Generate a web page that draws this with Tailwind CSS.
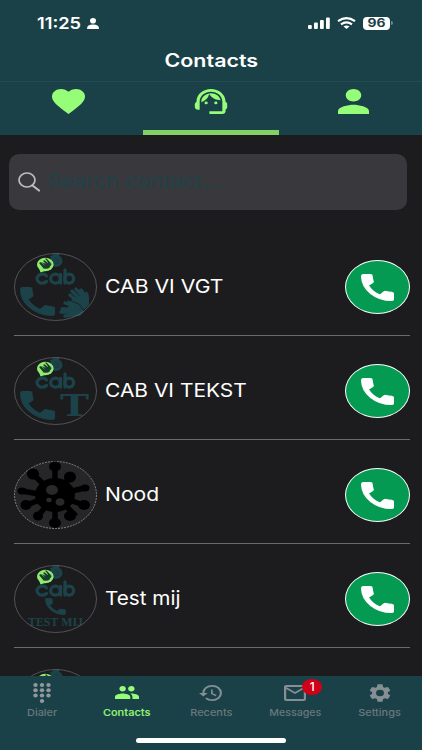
<!DOCTYPE html>
<html lang="en">
<head>
<meta charset="utf-8">
<title>Contacts</title>
<script src="https://cdn.jsdelivr.net/npm/@tailwindcss/browser@4"></script>
</head>
<body class="w-[422px] h-[750px] overflow-hidden bg-[#1c1c1e] font-[Inter,sans-serif] text-white">
<svg class="hidden">
  <symbol id="phone" viewBox="3 3 18 18" preserveAspectRatio="none"><path stroke="currentColor" stroke-width=".7" stroke-linejoin="round" d="M7 10.600c1.300 2.700 3.700 5.100 6.400 6.400l2.100-2.100c.27-.27.67-.36 1.020-.24 1.120.37 2.330.57 3.150.57.55 0 1 .45 1 1V19.650c0 .55-.45 1-1 1C10.700 20.650 3.350 13.300 3.350 4.350c0-.55.45-1 1-1h3.700c.55 0 1 .45 1 1 0 1.150.2 2.250.55 3.370.11.35.03.74-.25 1.020z"/></symbol>
  <symbol id="person" viewBox="4 4 16 16" preserveAspectRatio="none"><path d="M12 12c2.210 0 4-1.790 4-4s-1.790-4-4-4-4 1.790-4 4 1.790 4 4 4zm0 2c-2.670 0-8 1.340-8 4v2h16v-2c0-2.660-5.330-4-8-4z"/></symbol>
  <symbol id="cab" viewBox="0 0 83 68">
    <ellipse cx="42" cy="8" rx="6.500" ry="6" fill="#1b4349"/><path d="M35 4l6-3.500h5L44 4z" fill="#1b4349"/><path d="M41 5.500h4M41 8h5M41 10.500h4" stroke="#1d3439" stroke-width=".8"/>
    <ellipse cx="31.300" cy="11.500" rx="8.300" ry="6.800" fill="#8dec6e"/><path d="M25 15l1.500 4.500 6-2z" fill="#8dec6e"/>
    <path d="M25 10l3 3q3 4 7 2l2-4-4-4 1 3-4-3 2 4-4-2 3 4-4-4z" fill="#1c3a2c"/>
    <path d="M27 11l3 4 5-1 2-3M30 8l4 4M32 6l4 4" stroke="#1c3a2c" stroke-width="1.300" stroke-linecap="round" fill="none"/>
    <g transform="translate(0 1)" fill="none" stroke="#1b4349" stroke-width="3.300" stroke-linecap="round"><path d="M32.500 21.800a5.300 4.600 0 1 0 0 5.600"/><ellipse cx="41.500" cy="24.600" rx="4.900" ry="4.500"/><path d="M46.500 20.500v8.500M51 16v13"/><ellipse cx="55.200" cy="24.600" rx="4.400" ry="4.500"/></g>
  </symbol>
</svg>
<div class="relative flex h-full flex-col">
  <header class="h-[135px] shrink-0 bg-[#1b4148]">
    <div class="flex h-[46px] items-start pt-[15px]">
      <div class="ml-[37px] w-[50px] text-[16px] leading-4 font-semibold"><span class="inline-block origin-left scale-x-[1.140]">11:25</span></div>
      <svg class="mt-[3px] h-[11px] w-3" viewBox="0 0 12 11" fill="#fff"><ellipse cx="6" cy="2.800" rx="3" ry="2.800"/><path d="M0 10.500Q0 6.500 6 6.500t6 4Q12 11 11 11H1Q0 11 0 10.500"/></svg>
      <svg class="mt-[2px] ml-[209px] h-3 w-[22px]" viewBox="0 0 22 12" fill="#fff"><rect y="8" width="3.800" height="4" rx="1"/><rect x="6" y="5.500" width="3.800" height="6.500" rx="1"/><rect x="12" y="3" width="3.800" height="9" rx="1"/><rect x="18" y=".5" width="3.800" height="11.500" rx="1"/></svg>
      <svg class="mt-[2px] ml-[7px] h-3 w-[19px]" viewBox="0 0 19 12" fill="none" stroke="#fff" stroke-width="2.200"><path d="M1 4.200q8.500-6 17 0M4 7.300q5.500-4 11 0"/><path d="M9.500 12L6.500 9.500q3-2 6 0z" fill="#fff" stroke="none"/></svg>
      <div class="mt-[2px] ml-[7px] flex h-[13px] w-[27px] items-center justify-center rounded-[4px] bg-white text-[11.500px] font-bold text-[#1b4148]"><span class="inline-block scale-x-[1.200]">96</span></div>
      <i class="mt-[6px] ml-px h-1 w-[2px] rounded-r bg-[#71898e]"></i>
    </div>
    <div class="flex h-[35px] justify-center pt-[5px] text-[18px] leading-5 font-semibold"><span class="inline-block scale-x-[1.190]">Contacts</span></div>
    <div class="grid h-[54px] grid-cols-[143px_136px_143px] border-t border-[#254b52] text-[#96fd79]">
      <div class="pl-[52px] pt-[7px]"><svg class="h-[25px] w-[33px]" viewBox="2 3 20 18.350" preserveAspectRatio="none" fill="currentColor"><path d="m12 21.350-1.450-1.320C5.400 15.360 2 12.280 2 8.500 2 5.420 4.420 3 7.500 3c1.740 0 3.410.81 4.500 2.090C13.090 3.810 14.760 3 16.500 3 19.580 3 22 5.420 22 8.500c0 3.780-3.400 6.860-8.550 11.540z"/></svg></div>
      <div class="flex border-b-[5px] border-[#82d167] pt-[7px] pl-[51px]"><svg class="h-[25px] w-[34px]" viewBox="1.500 3 21 18" preserveAspectRatio="none" fill="currentColor"><path d="M21 12.220C21 6.730 16.740 3 12 3c-4.690 0-9 3.650-9 9.280-.6.340-1 .98-1 1.720v2c0 1.100.9 2 2 2h1v-6.100c0-3.870 3.130-7 7-7s7 3.130 7 7V19h-8v2h8c1.100 0 2-.9 2-2v-1.220c.59-.31 1-.92 1-1.640v-2.300c0-.7-.41-1.310-1-1.620z"/><circle cx="9" cy="13" r="1"/><circle cx="15" cy="13" r="1"/><path d="M18 11.030A6.040 6.040 0 0 0 12.050 6c-3.030 0-6.290 2.510-6.030 6.450a8.075 8.075 0 0 0 4.860-5.890c1.310 2.630 4 4.440 7.120 4.470z"/></svg></div>
      <div class="pl-[59px] pt-[7px]"><svg class="h-[25px] w-[31px]" fill="currentColor"><use href="#person"/></svg></div>
    </div>
  </header>
  <main class="flex h-[541px] shrink-0 flex-col overflow-hidden">
    <div class="mt-[18.500px] ml-[9px] flex h-[56px] w-[398px] shrink-0 items-center rounded-[10px] bg-[#39393d] pl-[9px] text-[19px] text-[#1e4249]">
      <svg class="mr-[7px] h-[20px] w-[22px]" viewBox="0 0 22 20" fill="none" stroke="#bcbcc1" stroke-width="1.700"><ellipse cx="9" cy="8" rx="8" ry="7"/><path d="M14.500 13.500l6.500 5" stroke-width="2.200" stroke-linecap="round"/></svg><span class="mt-px inline-block origin-left scale-x-[1.140]">Search contact...</span>
    </div>
    <div class="mt-[22px] ml-[14px] w-[396px]">
      <div class="flex h-[104px] items-center border-b border-[#6a6a6d] pt-[8px]">
        <svg class="h-[68px] w-[83px]" viewBox="0 0 83 68"><use href="#cab"/><svg x="6" y="34" width="35" height="29" fill="#1b4349" color="#1b4349"><use href="#phone"/></svg>
          <g fill="none" stroke="#1b4349" stroke-linecap="round" stroke-width="3.400"><path d="M66 46l-8-8M69 44l-7-8M72 43l-5-6M64 49l-8-7"/><path d="M60 53l-9-3M60 56H48M60 59H47M60 62l-9 1"/></g><path d="M63 43l8-1 1-4q3 2 3 7v7L66 60 56 48zM54 51l-1-4 12 5 5 7-4 4H55z" fill="#1b4349"/><path d="M55 47l10 4 5 7" fill="none" stroke="#1c1c1e" stroke-width=".8"/>
          <ellipse cx="41.500" cy="34" rx="41" ry="33.500" fill="none" stroke="#77777b" stroke-width=".6"/></svg>
        <div class="mt-px ml-[8px] flex-1 text-[19px]"><span class="inline-block origin-left scale-x-[1.115]">CAB VI VGT</span></div>
        <div class="flex h-[54px] w-[65px] items-center justify-center rounded-[50%] border border-white bg-[#049a52]"><svg class="h-[27px] w-[33px]" fill="#fff"><use href="#phone"/></svg></div>
      </div>
      <div class="flex h-[104px] items-center border-b border-[#6a6a6d] pt-[8px]">
        <svg class="h-[68px] w-[83px]" viewBox="0 0 83 68"><use href="#cab"/><svg x="6" y="34" width="35" height="29" fill="#1b4349" color="#1b4349"><use href="#phone"/></svg><text x="46" y="59" font-family="DejaVu Serif,serif" font-weight="bold" font-size="30" textLength="29" lengthAdjust="spacingAndGlyphs" fill="#1b4349">T</text><ellipse cx="41.500" cy="34" rx="41" ry="33.500" fill="none" stroke="#77777b" stroke-width=".6"/></svg>
        <div class="mt-px ml-[8px] flex-1 text-[19px]"><span class="inline-block origin-left scale-x-[1.102]">CAB VI TEKST</span></div>
        <div class="flex h-[54px] w-[65px] items-center justify-center rounded-[50%] border border-white bg-[#049a52]"><svg class="h-[27px] w-[33px]" fill="#fff"><use href="#phone"/></svg></div>
      </div>
      <div class="flex h-[104px] items-center border-b border-[#6a6a6d] pt-[8px]">
        <svg class="h-[68px] w-[83px]" viewBox="0 0 83 68"><ellipse cx="41.500" cy="34" rx="41" ry="33.500" fill="#262628" stroke="#aaa" stroke-width=".7" stroke-dasharray="2 1"/>
          <ellipse cx="41" cy="34" rx="20" ry="17"/><g stroke="#000" stroke-width="5.500" fill="none"><path d="M41 6v56M20 14l42 41M56 16L24 55M8 30l28 5 35-8M12 44l28-10 30 10"/></g>
          <g><ellipse cx="41" cy="5.500" rx="6" ry="5"/><ellipse cx="19" cy="13" rx="6" ry="5.500"/><ellipse cx="56" cy="16" rx="6" ry="5.500"/><ellipse cx="8" cy="30" rx="4.500" ry="3.500"/><ellipse cx="71" cy="27" rx="4.500" ry="3.500"/><ellipse cx="12" cy="44" rx="5.500" ry="5"/><ellipse cx="70" cy="44" rx="6" ry="5"/><ellipse cx="24" cy="55" rx="5" ry="4.500"/><ellipse cx="56" cy="55" rx="6" ry="5"/><ellipse cx="41" cy="62" rx="6" ry="5"/></g>
          <g fill="#29292b"><ellipse cx="38" cy="29" rx="6" ry="5"/><ellipse cx="35" cy="39" rx="2.700" ry="2.300"/><ellipse cx="46" cy="41" rx="4.500" ry="3.800"/></g></svg>
        <div class="mt-px ml-[8px] flex-1 text-[19px]"><span class="inline-block origin-left scale-x-[1.110]">Nood</span></div>
        <div class="flex h-[54px] w-[65px] items-center justify-center rounded-[50%] border border-white bg-[#049a52]"><svg class="h-[27px] w-[33px]" fill="#fff"><use href="#phone"/></svg></div>
      </div>
      <div class="flex h-[104px] items-center border-b border-[#6a6a6d] pt-[8px]">
        <svg class="h-[68px] w-[83px]" viewBox="0 0 83 68"><use href="#cab"/><svg x="31" y="33" width="21" height="17" fill="#1b4349" color="#1b4349"><use href="#phone"/></svg><text x="14" y="61" font-family="Liberation Serif,serif" font-weight="bold" font-size="12" textLength="55" lengthAdjust="spacingAndGlyphs" fill="#1b4349">TEST MIJ</text><ellipse cx="41.500" cy="34" rx="41" ry="33.500" fill="none" stroke="#77777b" stroke-width=".6"/></svg>
        <div class="mt-px ml-[8px] flex-1 text-[19px]"><span class="inline-block origin-left scale-x-[1.090]">Test mij</span></div>
        <div class="flex h-[54px] w-[65px] items-center justify-center rounded-[50%] border border-white bg-[#049a52]"><svg class="h-[27px] w-[33px]" fill="#fff"><use href="#phone"/></svg></div>
      </div>
      <div class="pt-[21px]"><svg class="h-[68px] w-[83px]" viewBox="0 0 83 68"><use href="#cab"/><ellipse cx="41.500" cy="34" rx="41" ry="33.500" fill="none" stroke="#77777b" stroke-width=".6"/></svg></div>
    </div>
  </main>
  <nav class="h-[74px] shrink-0 bg-[#1b4148]">
    <div class="grid h-[62px] grid-cols-5 text-center text-[9.500px] leading-3 font-medium text-[#69787c]">
      <div class="flex flex-col items-center pt-[6px]"><svg class="h-[21px] w-[18px]" viewBox="0 0 18 21" fill="#92989c"><ellipse cx="2.500" cy="3" rx="2.200" ry="2"/><ellipse cx="9" cy="3" rx="2.200" ry="2"/><ellipse cx="15.500" cy="3" rx="2.200" ry="2"/><ellipse cx="2.500" cy="8.300" rx="2.200" ry="2"/><ellipse cx="9" cy="8.300" rx="2.200" ry="2"/><ellipse cx="15.500" cy="8.300" rx="2.200" ry="2"/><ellipse cx="2.500" cy="13.600" rx="2.200" ry="2"/><ellipse cx="9" cy="13.600" rx="2.200" ry="2"/><ellipse cx="15.500" cy="13.600" rx="2.200" ry="2"/><ellipse cx="9" cy="19" rx="2.200" ry="2"/></svg><span class="mt-[4px] inline-block scale-x-[1.150]">Dialer</span></div>
      <div class="flex flex-col items-center pt-[10px] font-semibold text-[#8eee75]"><svg class="h-[13px] w-[24px]" viewBox="1 5 22 14" preserveAspectRatio="none" fill="#96fd79"><path d="M16 11c1.660 0 2.990-1.340 2.990-3S17.660 5 16 5s-3 1.340-3 3 1.340 3 3 3zm-8 0c1.660 0 2.990-1.340 2.990-3S9.660 5 8 5 5 6.340 5 8s1.340 3 3 3zm0 2c-2.330 0-7 1.170-7 3.500V19h14v-2.500C15 14.170 10.330 13 8 13zm8 0c-.29 0-.62.02-.97.05 1.160.84 1.970 1.970 1.970 3.450V19h6v-2.500c0-2.330-4.670-3.500-7-3.500z"/></svg><span class="mt-[8px] inline-block scale-x-[1.150]">Contacts</span></div>
      <div class="flex flex-col items-center pt-[9px]"><svg class="h-[16px] w-[23px]" viewBox="1 3 21 18" preserveAspectRatio="none" fill="#858f93"><path d="M13 3a9 9 0 0 0-9 9H1l3.890 3.890.07.14L9 12H6c0-3.870 3.130-7 7-7s7 3.130 7 7-3.130 7-7 7c-1.930 0-3.680-.79-4.940-2.060l-1.420 1.420A8.954 8.954 0 0 0 13 21a9 9 0 0 0 0-18zm-1 5v5l4.280 2.540.72-1.210-3.500-2.080V8z"/></svg><span class="mt-[6px] inline-block scale-x-[1.150]">Recents</span></div>
      <div class="relative flex flex-col items-center pt-[9px]"><svg class="h-[16px] w-[22px]" viewBox="2 4 20 16" preserveAspectRatio="none" fill="#858f93"><path d="M22 6c0-1.100-.9-2-2-2H4c-1.100 0-2 .9-2 2v12c0 1.100.9 2 2 2h16c1.100 0 2-.9 2-2zm-2 0-8 5-8-5zm0 12H4V8l8 5 8-5z"/></svg><span class="mt-[6px] inline-block scale-x-[1.120]">Messages</span><span class="absolute top-[3px] left-[49px] h-[16px] w-[20px] rounded-[50%] bg-[#d00018] text-[12px] leading-4 text-white">1</span></div>
      <div class="flex flex-col items-center pt-[8px]"><svg class="h-[18px] w-[22px]" viewBox="2 2 20 20" preserveAspectRatio="none" fill="#858f93"><path d="M19.140 12.940c.04-.3.060-.61.060-.94s-.02-.64-.07-.94l2.030-1.580a.49.49 0 0 0 .12-.61l-1.920-3.320a.488.488 0 0 0-.59-.22l-2.390.96a7.030 7.030 0 0 0-1.620-.94l-.36-2.540a.484.484 0 0 0-.48-.41h-3.840c-.24 0-.43.17-.47.41l-.36 2.540c-.59.24-1.130.57-1.620.94l-2.390-.96a.48.48 0 0 0-.59.22L2.740 8.870c-.12.21-.08.47.12.61l2.030 1.580c-.05.3-.09.63-.09.94s.02.64.07.94l-2.030 1.580a.49.49 0 0 0-.12.61l1.920 3.320c.12.22.37.29.59.22l2.390-.96c.5.38 1.030.7 1.620.94l.36 2.540c.05.24.24.41.48.41h3.840c.24 0 .44-.17.47-.41l.36-2.540c.59-.24 1.130-.56 1.620-.94l2.390.96c.22.08.47 0 .59-.22l1.920-3.320a.49.49 0 0 0-.12-.61zM12 15.600A3.600 3.600 0 1 1 12 8.400a3.600 3.600 0 0 1 0 7.200z"/></svg><span class="mt-[5px] inline-block scale-x-[1.150]">Settings</span></div>
    </div>
    <div class="mx-auto h-[5px] w-[150px] rounded-full bg-white"></div>
  </nav>
</div>
</body>
</html>
